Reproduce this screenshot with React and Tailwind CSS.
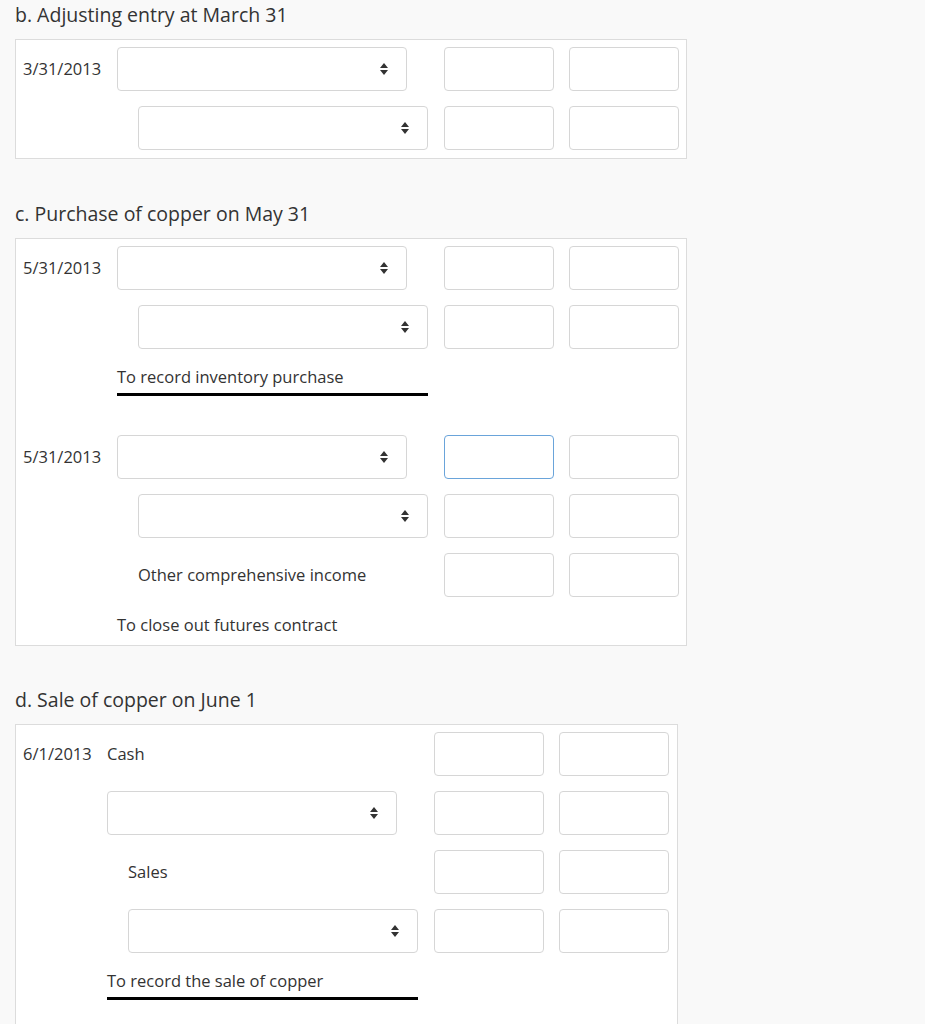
import React from "react";

const Arrow = () => (
  <svg width="8" height="12" viewBox="0 0 8 12" aria-hidden="true">
    <path d="M4 0 L8 5 H0 Z M0 7 H8 L4 12 Z" fill="#333" />
  </svg>
);

function Select({ indent }) {
  return (
    <div
      className={
        indent
          ? "ml-[21px] flex h-[44px] w-[290px] items-center justify-end rounded-[4px] border border-[#d6d6d6] bg-white pr-[18px]"
          : "flex h-[44px] w-[290px] items-center justify-end rounded-[4px] border border-[#d6d6d6] bg-white pr-[18px]"
      }
    >
      <Arrow />
    </div>
  );
}

function Input({ focused }) {
  return (
    <div
      className={
        focused
          ? "h-[44px] w-[110px] rounded-[4px] border border-[#6aa4da] bg-white"
          : "h-[44px] w-[110px] rounded-[4px] border border-[#d6d6d6] bg-white"
      }
    />
  );
}

function Inputs({ focused }) {
  return (
    <div className="ml-[16px] flex gap-[15px]">
      <Input focused={focused} />
      <Input />
    </div>
  );
}

function Row({ date, dateW, children, focused, mt }) {
  return (
    <div className={mt ? "mt-[15px] flex h-[44px] items-center" : "flex h-[44px] items-center"}>
      <div className={dateW === "sm" ? "w-[84px] shrink-0" : "w-[94px] shrink-0"}>{date}</div>
      <div className="w-[311px] shrink-0">{children}</div>
      <Inputs focused={focused} />
    </div>
  );
}

function Memo({ dateW, text, underline, className }) {
  return (
    <div className={className}>
      <div className="flex">
        <div className={dateW === "sm" ? "w-[84px] shrink-0" : "w-[94px] shrink-0"} />
        <div
          className={
            underline
              ? "w-[311px] border-b-[3px] border-black pb-[5px] leading-[22px]"
              : "w-[311px] leading-[22px]"
          }
        >
          {text}
        </div>
      </div>
    </div>
  );
}

export default function App() {
  return (
    <div
      className="min-h-screen bg-[#f9f9f9] px-[15px] text-[16.5px] text-[#333]"
      style={{ fontFamily: '"Open Sans", "Noto Sans", sans-serif' }}
    >
      <h2 className="h-[30px] text-[19.5px] leading-[30px]">b. Adjusting entry at March 31</h2>
      <div className="mt-[9px] w-[672px] border border-[#dcdcdc] bg-white pt-[7px] pb-[8px] pl-[7px] pr-[7px]">
        <Row date="3/31/2013">
          <Select />
        </Row>
        <Row mt>
          <Select indent />
        </Row>
      </div>

      <h2 className="mt-[40px] h-[30px] text-[19.5px] leading-[30px]">c. Purchase of copper on May 31</h2>
      <div className="mt-[9px] w-[672px] border border-[#dcdcdc] bg-white pt-[7px] pb-[9px] pl-[7px] pr-[7px]">
        <Row date="5/31/2013">
          <Select />
        </Row>
        <Row mt>
          <Select indent />
        </Row>
        <Memo className="mt-[17px]" text="To record inventory purchase" underline />
        <div className="mt-[39px]">
          <Row date="5/31/2013" focused>
            <Select />
          </Row>
        </div>
        <Row mt>
          <Select indent />
        </Row>
        <Row mt>
          <div className="pl-[21px]">Other comprehensive income</div>
        </Row>
        <Memo className="mt-[17px]" text="To close out futures contract" />
      </div>

      <h2 className="mt-[39px] h-[30px] text-[19.5px] leading-[30px]">d. Sale of copper on June 1</h2>
      <div className="mt-[9px] w-[663px] border border-[#dcdcdc] bg-white pt-[7px] pb-[40px] pl-[7px] pr-[8px]">
        <Row date="6/1/2013" dateW="sm">
          <div>Cash</div>
        </Row>
        <Row dateW="sm" mt>
          <Select />
        </Row>
        <Row dateW="sm" mt>
          <div className="pl-[21px]">Sales</div>
        </Row>
        <Row dateW="sm" mt>
          <Select indent />
        </Row>
        <Memo dateW="sm" className="mt-[17px]" text="To record the sale of copper" underline />
      </div>
    </div>
  );
}
